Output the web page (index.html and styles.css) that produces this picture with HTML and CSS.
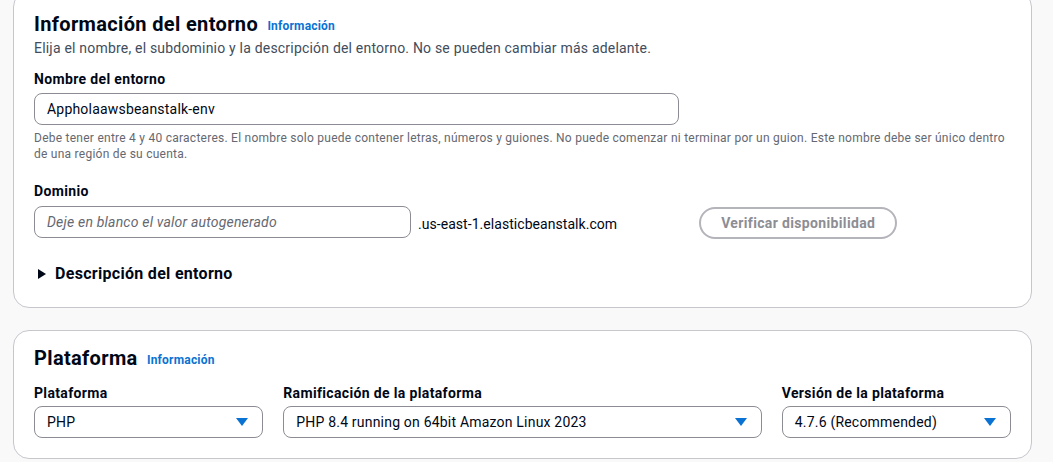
FILE: index.html
```html
<!DOCTYPE html>
<html lang="es">
<head>
<meta charset="utf-8">
<title>Crear entorno</title>
<link rel="stylesheet" href="styles.css">
</head>
<body>
<main class="page">
  <section class="card card-env">
    <header class="card-header">
      <h2 class="card-title">Información del entorno <a class="info-link" href="#">Información</a></h2>
      <p class="card-desc">Elija el nombre, el subdominio y la descripción del entorno. No se pueden cambiar más adelante.</p>
    </header>
    <div class="field">
      <label class="field-label">Nombre del entorno</label>
      <div class="input input-name">Appholaawsbeanstalk-env</div>
      <p class="field-help">Debe tener entre 4 y 40 caracteres. El nombre solo puede contener letras, números y guiones. No puede comenzar ni terminar por un guion. Este nombre debe ser único dentro de una región de su cuenta.</p>
    </div>
    <div class="field field-domain">
      <label class="field-label">Dominio</label>
      <div class="domain-row">
        <div class="input input-domain placeholder">Deje en blanco el valor autogenerado</div>
        <span class="domain-suffix">.us-east-1.elasticbeanstalk.com</span>
        <button class="btn-check" type="button">Verificar disponibilidad</button>
      </div>
    </div>
    <div class="expander">
      <svg class="caret-right" width="10" height="10" viewBox="0 0 10 10"><path d="M1 0 L9 5 L1 10 Z" fill="#000716"/></svg>
      <span>Descripción del entorno</span>
    </div>
  </section>

  <section class="card card-platform">
    <h2 class="card-title">Plataforma <a class="info-link" href="#">Información</a></h2>
    <div class="platform-grid">
      <div class="field">
        <label class="field-label">Plataforma</label>
        <div class="select"><span>PHP</span><svg class="caret-down" width="12" height="8" viewBox="0 0 12 8"><path d="M0 0 H12 L6 8 Z" fill="#0972d3"/></svg></div>
      </div>
      <div class="field span-2">
        <label class="field-label">Ramificación de la plataforma</label>
        <div class="select"><span>PHP 8.4 running on 64bit Amazon Linux 2023</span><svg class="caret-down" width="12" height="8" viewBox="0 0 12 8"><path d="M0 0 H12 L6 8 Z" fill="#0972d3"/></svg></div>
      </div>
      <div class="field">
        <label class="field-label">Versión de la plataforma</label>
        <div class="select"><span>4.7.6 (Recommended)</span><svg class="caret-down" width="12" height="8" viewBox="0 0 12 8"><path d="M0 0 H12 L6 8 Z" fill="#0972d3"/></svg></div>
      </div>
    </div>
  </section>
</main>
</body>
</html>
```

FILE: styles.css
```css
* { box-sizing: border-box; }
html, body { margin: 0; padding: 0; }
body {
  background: #f9f9fa;
  font-family: Roboto, "Open Sans", sans-serif;
  color: #000716;
  font-size: 14px;
  line-height: 20px;
  letter-spacing: 0.2px;
}
.page {
  padding: 0 21px 0 13px;
  margin-top: -9px;
  display: flex;
  flex-direction: column;
  gap: 22px;
}
.card {
  background: #fff;
  border: 1px solid #c6c6cd;
  border-radius: 16px;
  padding: 20px;
}
.card-env { padding-bottom: 23px; }
.card-title {
  margin: 0;
  font-size: 20px;
  line-height: 24px;
  font-weight: 700;
  letter-spacing: 0.35px;
}
.info-link {
  font-size: 12px;
  font-weight: 700;
  color: #0972d3;
  text-decoration: none;
  margin-left: 4px;
  vertical-align: 1px;
  letter-spacing: 0.2px;
}
.card-desc {
  margin: 0;
  color: #414d5c;
  font-size: 14px;
}
.card-env .card-header { margin-bottom: 11px; }
.field-label {
  display: block;
  font-weight: 700;
  font-size: 14px;
  line-height: 20px;
  margin-bottom: 4px;
  letter-spacing: 0.35px;
}
.input, .select {
  height: 32px;
  border: 1px solid #8c8c94;
  border-radius: 8px;
  padding: 0 12px;
  display: flex;
  align-items: center;
  font-size: 14px;
  background: #fff;
}
.input-name { width: 645px; }
.field-help {
  margin: 5px 0 0;
  font-size: 12px;
  line-height: 16px;
  color: #656871;
  letter-spacing: 0.25px;
}
.field-domain { margin-top: 19px; }
.domain-row {
  display: flex;
  align-items: center;
}
.input-domain { width: 377px; }
.placeholder { font-style: italic; color: #656871; }
.domain-suffix {
  margin-left: 7px;
  padding-top: 4px;
  letter-spacing: 0.05px;
}
.btn-check {
  margin-left: 82px;
  margin-top: 2px;
  height: 32px;
  padding: 0 20px;
  border: 2px solid #b4b4bb;
  border-radius: 20px;
  background: #fff;
  color: #8d8d94;
  font-family: inherit;
  font-size: 14px;
  font-weight: 700;
  letter-spacing: 0.35px;
}
.expander {
  margin-top: 25px;
  display: flex;
  align-items: center;
  gap: 8px;
  font-size: 16px;
  font-weight: 700;
  padding-left: 3px;
  letter-spacing: 0.3px;
}
.card-platform { padding-top: 15px; }
.platform-grid {
  margin-top: 11px;
  display: grid;
  grid-template-columns: repeat(4, 1fr);
  column-gap: 20px;
}
.platform-grid .field-label { margin-bottom: 3px; }
.span-2 { grid-column: span 2; }
.select {
  justify-content: space-between;
}
.caret-down { margin-right: 2px; }
```
